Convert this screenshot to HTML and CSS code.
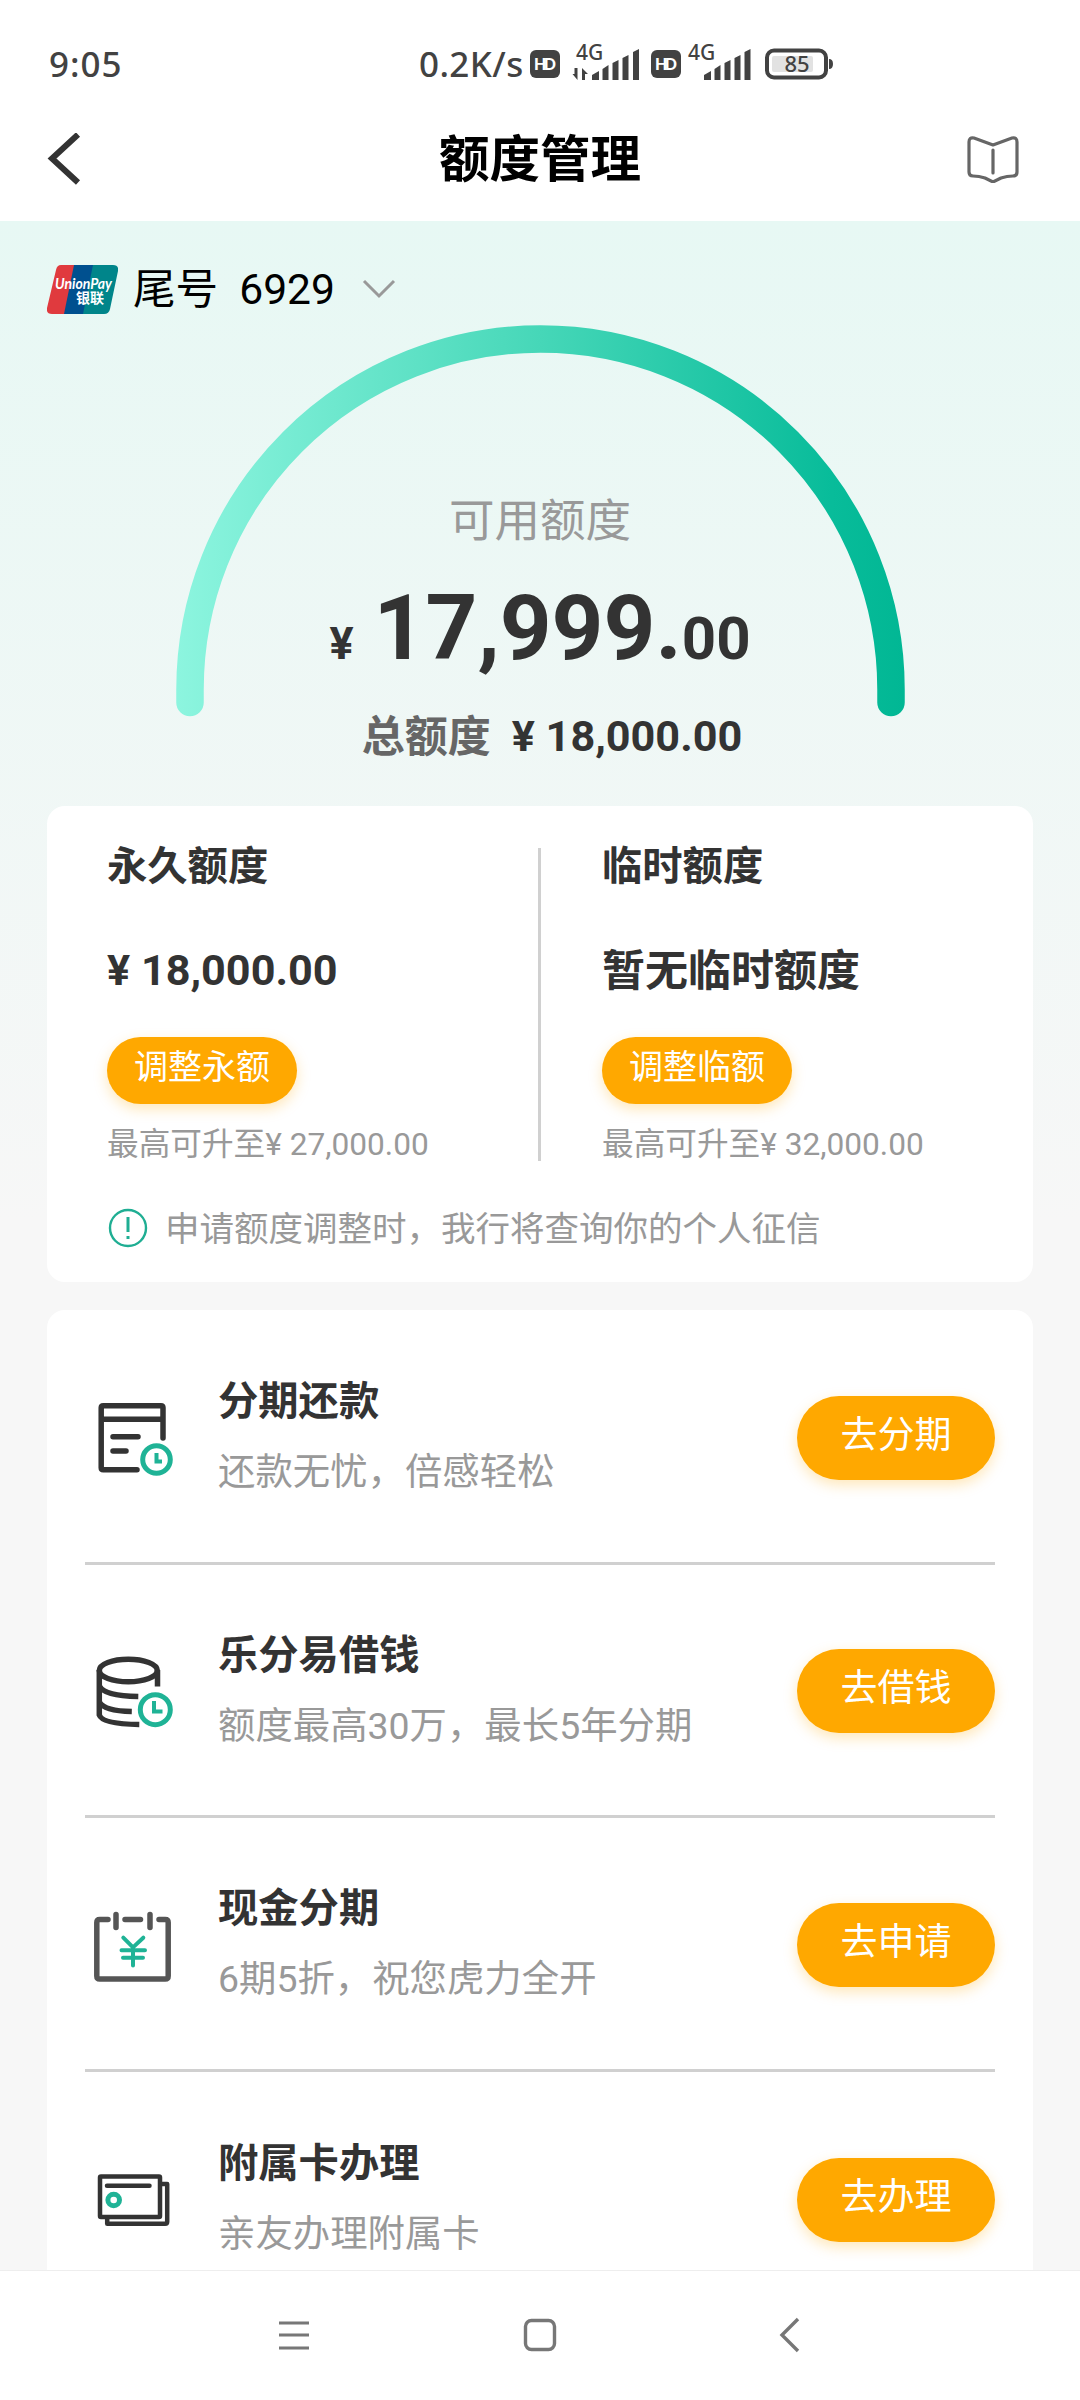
FILE: index.html
```
<!DOCTYPE html>
<html lang="zh-CN">
<head>
<meta charset="utf-8">
<title>额度管理</title>
<link rel="stylesheet" href="styles.css">
</head>
<body>
<div class="screen">
  <div class="status">
    <span class="time">9:05</span>
    <div class="indicators">
      <span class="rate">0.2K/s</span>
      <svg class="sys" width="314" height="50" viewBox="0 0 314 50">
        <g fill="#424242">
          <rect x="0" y="15" width="30" height="28" rx="6"/>
          <rect x="121" y="15" width="30" height="28" rx="6"/>
          <path d="M62 45v-5l7-4v9zM72.500 45v-11l6-4v15zM82.500 45v-17l6-3v20zM92.500 45v-22l6-3v25zM103 45v-28l6-3v31z"/>
          <path d="M174 45v-5l7-4v9zM184.500 45v-11l6-4v15zM194.500 45v-17l6-3v20zM204.500 45v-22l6-3v25zM214.500 45v-28l6-3v31z"/>
          <path d="M47.500 33v12l-5-6h2v-6zM52 45V33l6 6h-3v6z"/>
          <path d="M299 24q4 0 4 5t-4 5z"/>
        </g>
        <rect x="237" y="15.500" width="59" height="27" rx="7" fill="none" stroke="#424242" stroke-width="4"/>
        <rect x="242" y="21" width="41" height="16" rx="2" fill="#e2e2e2"/>
        <text x="4" y="35" class="hd" textLength="22">HD</text>
        <text x="125" y="35" class="hd" textLength="22">HD</text>
        <text x="46" y="25" class="net">4G</text>
        <text x="158" y="25" class="net">4G</text>
        <text x="267" y="37" class="bat">85</text>
      </svg>
    </div>
  </div>
  <div class="header">
    <svg width="36" height="52" viewBox="0 0 36 52"><path d="M31 1.500 5 25.500 31 49.500" fill="none" stroke="#333" stroke-width="6"/></svg>
    <h1>额度管理</h1>
    <svg width="52" height="48" viewBox="0 0 52 48" fill="none" stroke="#666" stroke-width="3.200" stroke-linejoin="round" stroke-linecap="round"><path d="M26 10 7 3q-5-1-5 4v30q0 4 4 4 6 0 12 2l8 4 8-4q6-2 12-2 4 0 4-4V7q0-5-5-4zM26 15v23"/></svg>
  </div>
  <div class="content">
    <div class="account">
      <svg width="71" height="49" viewBox="0 0 71 49">
        <path d="M14 0h18L22 49H5q-6 0-5-6L9 5q1-5 5-5z" fill="#e03a3e"/>
        <path d="M27 0h24L41 49H17z" fill="#00508f"/>
        <path d="M46 0h20q6 0 5 6l-8 38q-1 5-6 5H36z" fill="#00858a"/>
        <text x="8" y="24" class="up-en" textLength="57" lengthAdjust="spacingAndGlyphs">UnionPay</text>
        <text x="29" y="38" class="up-cn">银联</text>
      </svg>
      <span class="tail">尾号</span><span class="tail num">6929</span>
      <svg width="34" height="22" viewBox="0 0 34 22"><path d="m2 3 15 15L32 3" fill="none" stroke="#999" stroke-width="3"/></svg>
    </div>
    <div class="gauge">
      <svg class="arc" width="730" height="392" viewBox="0 0 730 392">
        <defs><linearGradient id="g" gradientUnits="userSpaceOnUse" x1="0" y1="0" x2="730" y2="0"><stop offset="0" stop-color="#8df5df"/><stop offset=".5" stop-color="#46d7b8"/><stop offset=".9" stop-color="#08bc9a"/><stop offset="1" stop-color="#01b794"/></linearGradient></defs>
        <path d="M15 377.500V364.500A350.500 350.500 0 0 1 716 364.500V377.500" fill="none" stroke="url(#g)" stroke-width="27.500" stroke-linecap="round"/>
      </svg>
      <div class="figures">
        <div class="label">可用额度</div>
        <div class="amount"><span class="cur">¥</span><span class="int">17,999.</span><span class="dec">00</span></div>
        <div class="total"><span class="total-label">总额度</span><span>¥ 18,000.00</span></div>
      </div>
    </div>
    <section class="card limits">
      <div class="cols">
        <div class="col">
          <h2>永久额度</h2>
          <div class="value">¥ 18,000.00</div>
          <button class="pill small">调整永额</button>
          <div class="max">最高可升至¥ 27,000.00</div>
        </div>
        <div class="rule"></div>
        <div class="col">
          <h2>临时额度</h2>
          <div class="value cn">暂无临时额度</div>
          <button class="pill small">调整临额</button>
          <div class="max">最高可升至¥ 32,000.00</div>
        </div>
      </div>
      <div class="notice">
        <svg width="40" height="40" viewBox="0 0 40 40"><circle cx="20" cy="20" r="18" fill="none" stroke="#1fae93" stroke-width="2.400"/><path d="M20 9v15M20 28v3" stroke="#1fae93" stroke-width="3"/></svg>
        <span>申请额度调整时，我行将查询你的个人征信</span>
      </div>
    </section>
    <section class="card services">
      <div class="row">
        <svg class="icon" width="80" height="80" viewBox="0 0 80 80" fill="none" stroke="#333" stroke-width="5.500" stroke-linecap="round" stroke-linejoin="round"><path d="M44 73.700H10.200q-2 0-2-2V11.800q0-2 2-2H68q2 0 2 2V42M8.200 23.300H70M20 40.700h25M20 55h13"/><circle cx="63.500" cy="63.500" r="13.800" stroke="#1fb396" stroke-width="5"/><path d="M63.500 57v8.500H69" stroke="#1fb396" stroke-width="4" stroke-linecap="butt" stroke-linejoin="miter"/></svg>
        <div class="desc"><h3>分期还款</h3><p>还款无忧，倍感轻松</p></div>
        <button class="pill">去分期</button>
      </div>
      <div class="row">
        <svg class="icon" width="80" height="80" viewBox="0 0 80 80" fill="none" stroke="#333" stroke-width="5.500"><ellipse cx="35.300" cy="20.500" rx="29" ry="11.300"/><path d="M6.300 20v45q3 9 40 9.500M64.500 20v16.500M6.300 36q5 10 39 10.500M6.300 52q5 9 32.500 9.500"/><circle cx="62.300" cy="59.700" r="15" stroke="#1fb396" stroke-width="5"/><path d="M61 51v10.500h8.500" stroke="#1fb396" stroke-width="4"/></svg>
        <div class="desc"><h3>乐分易借钱</h3><p>额度最高30万，最长5年分期</p></div>
        <button class="pill">去借钱</button>
      </div>
      <div class="row">
        <svg class="icon" width="80" height="80" viewBox="0 0 80 80" fill="none" stroke="#555" stroke-width="5.500" stroke-linecap="round" stroke-linejoin="round"><path d="M15 16.500H6.800q-3 0-3 3V73q0 3 3 3h65.400q3 0 3-3V19.500q0-3-3-3H66M32 16.500h15.500M23 11.500v13M57 11.500v13"/><path d="m30.300 34.700 9.700 9.700 10.300-9.700M40 44v18.500M28.500 47.300H52M30 54.700h20" stroke="#1fb396" stroke-width="4"/></svg>
        <div class="desc"><h3>现金分期</h3><p>6期5折，祝您虎力全开</p></div>
        <button class="pill">去申请</button>
      </div>
      <div class="row">
        <svg class="icon" width="80" height="80" viewBox="0 0 80 80" fill="none" stroke="#333" stroke-width="4.500" stroke-linecap="round" stroke-linejoin="round"><rect x="7" y="18.600" width="60" height="40.500" rx="1"/><path d="M14.200 61v4.700h58q2 0 2-2V26h-5M14 27.700h42.500"/><circle cx="20.700" cy="42" r="5.800" stroke="#1fb396" stroke-width="5"/></svg>
        <div class="desc"><h3>附属卡办理</h3><p>亲友办理附属卡</p></div>
        <button class="pill">去办理</button>
      </div>
    </section>
  </div>
  <div class="nav">
    <svg width="36" height="36" viewBox="0 0 36 36" fill="none" stroke="#777" stroke-width="3"><path d="M3 6h30M3 18h30M3 31h30"/></svg>
    <svg width="36" height="36" viewBox="0 0 36 36" fill="none" stroke="#777" stroke-width="3.400"><rect x="3.500" y="3.500" width="29" height="29" rx="6"/></svg>
    <svg width="36" height="36" viewBox="0 0 36 36" fill="none" stroke="#777" stroke-width="3.400"><path d="M30 2 14 18l16 16"/></svg>
  </div>
</div>
</body>
</html>
```
FILE: styles.css
```
* { box-sizing: border-box; margin: 0; padding: 0; }
body { background: #fff; font-family: Roboto, "Noto Sans CJK SC", sans-serif; color: #333; }
svg { display: block; flex: none; }
.screen { width: 1080px; height: 2400px; display: flex; flex-direction: column; overflow: hidden; }

.status { height: 100px; flex: none; display: flex; padding: 35px 0 0 49px; color: #424242; }
.time, .rate { font: 500 35px/57px "Noto Sans", sans-serif; }
.time { width: 370px; letter-spacing: 1px; }
.indicators { display: flex; }
.rate { width: 111px; letter-spacing: 0.4px; white-space: nowrap; }
.hd { font: 900 16px Lato, sans-serif; fill: #fff; }
.net { font: 500 21px "Noto Sans", sans-serif; fill: #424242; }
.bat { font: 500 22px "Noto Sans", sans-serif; fill: #424242; text-anchor: middle; }

.header { height: 121px; flex: none; display: flex; align-items: center; justify-content: space-between; padding: 0 61px 4px 47px; }
.header h1 { font-size: 50.500px; line-height: 60px; font-weight: 700; color: #000; margin: 2px 0 0 30px; }

.content { height: 2049px; flex: none; overflow: hidden; background: linear-gradient(#e7f8f4, #f7f7f7 1000px); padding: 0 47px; }
.account { height: 104px; display: flex; align-items: center; padding-top: 32px; }
.up-en { font: italic 700 15px Lato, sans-serif; fill: #fff; }
.up-cn { font: 700 14px "Noto Sans CJK SC", sans-serif; fill: #fff; }
.tail { font-size: 42.600px; line-height: 60px; color: #000; margin-left: 15px; }
.tail.num { margin: 0 27px 0 21px; }

.gauge { height: 481px; display: grid; justify-items: center; }
.arc, .figures { grid-area: 1 / 1; }
.figures { display: flex; flex-direction: column; align-items: center; padding-top: 167px; }
.label { font-size: 45.500px; line-height: 60px; color: #999; }
.amount { display: flex; align-items: baseline; font-weight: 700; line-height: 106px; margin-top: 23px; height: 106px; }
.cur { font-size: 45px; margin-right: 20px; }
.int { font-size: 90.500px; }
.dec { font-size: 60px; }
.total { display: flex; align-items: center; gap: 21px; font-size: 43.200px; line-height: 60px; font-weight: 700; margin: 26px 0 0 24px; }
.total-label { color: #666; font-size: 43px; }

.card { background: #fff; border-radius: 18px; }
.limits { height: 476px; padding: 31px 60px 0; }
.cols { display: flex; height: 324px; }
.col { width: 431px; flex: none; }
.col h2 { font-size: 40.300px; line-height: 60px; font-weight: 700; }
.rule { width: 3px; flex: none; height: 313px; background: #d0d0d0; margin: 11px 61px 0 0; }
.value { font-size: 43.200px; line-height: 60px; font-weight: 700; margin: 44px 0 36px; height: 60px; white-space: nowrap; }
.value.cn { font-size: 43px; }
.pill { display: block; border: 0; border-radius: 43px; background: #ffa800; color: #fff; font-family: inherit; width: 198px; height: 84px; margin-top: 3px; font-size: 37px; line-height: 72px; padding-bottom: 4px; box-shadow: 0 5px 14px rgba(255,168,0,.28); }
.pill.small { width: 190px; height: 67px; margin-top: 0; padding-bottom: 8px; font-size: 34px; line-height: 56px; }
.max { font-size: 31.650px; line-height: 44px; color: #999; margin-top: 19px; white-space: nowrap; }
.notice { display: flex; align-items: center; gap: 17px; padding-left: 1px; margin-top: 42px; font-size: 34.500px; color: #999; height: 50px; }
.notice span { margin-top: -4px; }

.services { margin-top: 28px; height: 1021px; padding: 1px 38px 0; }
.row { height: 253.500px; display: flex; align-items: center; border-bottom: 3px solid #d0d0d0; }
.row:last-child { border: 0; }
.icon { margin-left: 8px; }
.desc { margin-left: 45px; flex: 1; }
.desc h3 { font-size: 40.300px; line-height: 60px; font-weight: 700; }
.desc p { font-size: 37.400px; line-height: 56px; color: #999; margin-top: 12px; }

.nav { flex: 1; border-top: 1px solid #eee; display: flex; align-items: center; justify-content: center; gap: 210px; padding-bottom: 2px; }
```
